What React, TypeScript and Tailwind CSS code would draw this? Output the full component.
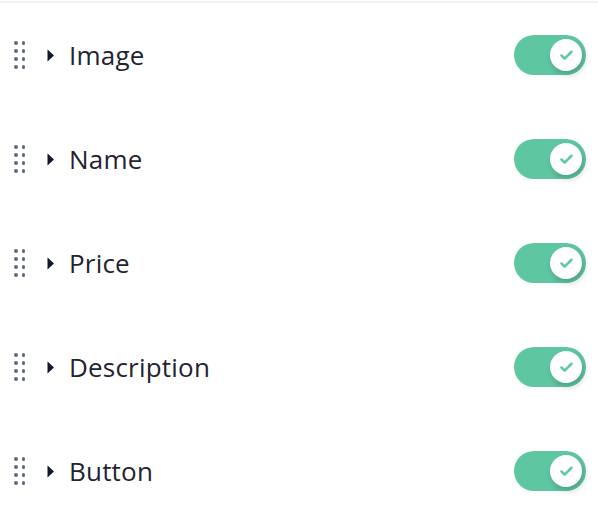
import React from 'react';
import { Check } from 'lucide-react';

const fields = ['Image', 'Name', 'Price', 'Description', 'Button'];

const DragHandle: React.FC = () => (
  <div className="grid grid-cols-2 gap-x-[4px] gap-y-[4.5px]">
    {Array.from({ length: 8 }).map((_, i) => (
      <span key={i} className="block w-[3.5px] h-[3.5px] rounded-full bg-[#5f6878]" />
    ))}
  </div>
);

const Toggle: React.FC = () => (
  <div className="w-[72px] h-[40px] rounded-full bg-[#5ec7a1] flex items-center justify-end pr-[4px]">
    <div className="w-[32px] h-[32px] rounded-full bg-white flex items-center justify-center shadow-[2px_4px_7px_rgba(0,0,0,0.18)]">
      <Check className="w-[15px] h-[15px] text-[#5ec7a1]" strokeWidth={4} />
    </div>
  </div>
);

const App: React.FC = () => {
  return (
    <div className="w-[598px] h-[518px] overflow-hidden bg-white pt-px" style={{ fontFamily: '"Open Sans", "Noto Sans", sans-serif' }}>
      <div className="border-t-2 border-[#eef2f6]">
        {fields.map((name) => (
          <div key={name} className="h-[104px] flex items-center pl-[14px] pr-[12px]">
            <DragHandle />
            <svg width="9" height="15" viewBox="0 0 9 15" className="ml-[21px]">
              <path d="M1.5 1.5 L8 7.5 L1.5 13.5 Z" fill="#111827" />
            </svg>
            <span className="ml-[14px] text-[26px] tracking-[0.2px] text-[#1f2430] leading-none">{name}</span>
            <div className="ml-auto">
              <Toggle />
            </div>
          </div>
        ))}
      </div>
    </div>
  );
};

export default App;
